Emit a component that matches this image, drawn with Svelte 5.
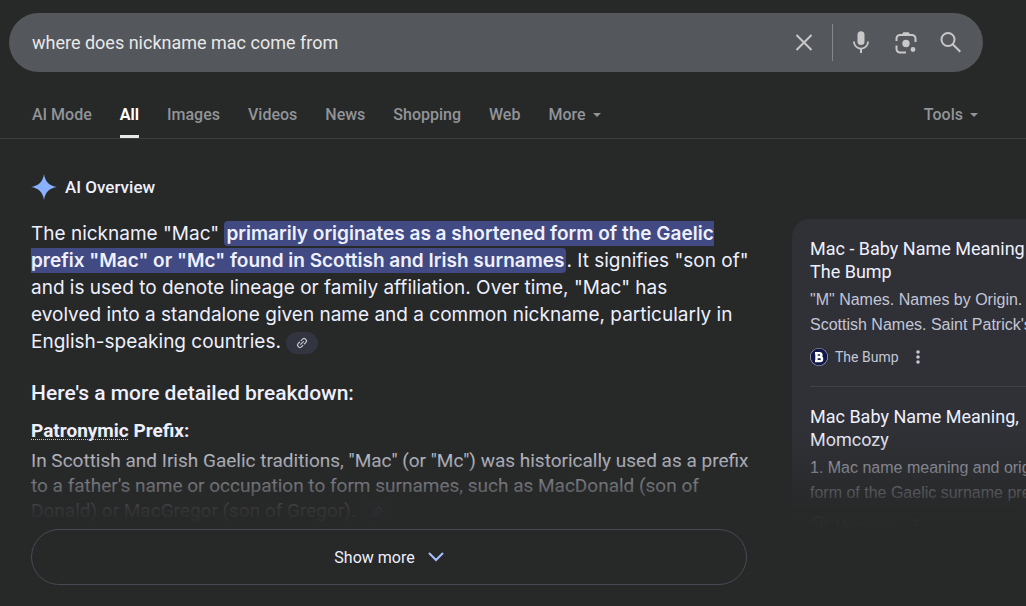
<script>
    let query = "where does nickname mac come from";

    const tabs = [
        "AI Mode",
        "All",
        "Images",
        "Videos",
        "News",
        "Shopping",
        "Web",
    ];
    let active = "All";
</script>

{#snippet linkIcon()}
    <svg class="link" viewBox="0 0 24 24" aria-hidden="true">
        <g transform="rotate(-45 12 12)">
            <path
                d="M11 17H7A5 5 0 0 1 7 7h4v2H7a3 3 0 0 0 0 6h4zm-3-4v-2h8v2zm5 4v-2h4a3 3 0 0 0 0-6h-4V7h4a5 5 0 0 1 0 10z"
            />
        </g>
    </svg>
{/snippet}

{#snippet dots()}
    <svg class="dots" viewBox="0 0 4 14" aria-hidden="true">
        <circle cx="2" cy="2" r="1.8" />
        <circle cx="2" cy="7" r="1.8" />
        <circle cx="2" cy="12" r="1.8" />
    </svg>
{/snippet}

<div class="page">
    <form class="search" role="search" on:submit|preventDefault>
        <input type="text" aria-label="Search" bind:value={query} />
        <button type="button" aria-label="Clear" on:click={() => (query = "")}>
            <svg viewBox="0 0 24 24">
                <path class="line" d="M4.5 4l15 15M19.5 4l-15 15" />
            </svg>
        </button>
        <span class="divider"></span>
        <button type="button" aria-label="Search by voice">
            <svg viewBox="0 0 24 24">
                <path
                    d="M12 14a3.5 3.5 0 0 0 3.5-3.5V3.8a3.5 3.5 0 0 0-7 0v6.7A3.5 3.5 0 0 0 12 14z"
                />
                <path
                    d="M18.2 10.500a6.200 6.200 0 0 1-12.400 0H4a8 8 0 0 0 7 7.900V22h2v-3.600a8 8 0 0 0 7-7.900z"
                />
            </svg>
        </button>
        <button type="button" aria-label="Search by image">
            <svg viewBox="0 0 24 24">
                <path
                    class="line"
                    d="M2.5 10V7.500A3.500 3.500 0 0 1 6 4h12a3.500 3.500 0 0 1 3.500 3.500V11M2.500 14.500V18A3.500 3.500 0 0 0 6 21.500h6"
                />
                <path d="M7.5 4 9.3 1.2h5.400L16.500 4z" />
                <circle cx="12" cy="12.5" r="3.7" />
                <circle cx="19" cy="18.5" r="2.4" />
            </svg>
        </button>
        <button type="submit" aria-label="Search">
            <svg viewBox="0 0 24 24">
                <circle class="line" cx="9" cy="8.5" r="6.5" />
                <path class="line" d="M13.7 13.2l7.600 7.600" />
            </svg>
        </button>
    </form>

    <nav>
        {#each tabs as tab}
            <a
                href="#{tab}"
                class:active={tab === active}
                on:click|preventDefault={() => (active = tab)}>{tab}</a
            >
        {/each}
        <button>More <span class="caret"></span></button>
        <button class="tools">Tools <span class="caret"></span></button>
    </nav>

    <div class="results">
        <main>
            <div class="label">
                <svg class="spark" viewBox="0 0 24 24" aria-hidden="true">
                    <path
                        d="M12 0C13 7 17 11 24 12 17 13 13 17 12 24 11 17 7 13 0 12 7 11 11 7 12 0z"
                    />
                </svg>
                <h1>AI Overview</h1>
            </div>
            <p class="answer">
                The nickname "Mac" <mark
                    >primarily originates as a shortened form of the Gaelic<br
                    />prefix "Mac" or "Mc" found in Scottish and Irish surnames</mark
                >. It signifies "son of"<br />
                and is used to denote lineage or family affiliation. Over time, "Mac"
                has<br />
                evolved into a standalone given name and a common nickname, particularly
                in<br />
                English-speaking countries.
                <button class="chip" aria-label="View related links"
                    >{@render linkIcon()}</button
                >
            </p>
            <h2>Here's a more detailed breakdown:</h2>
            <h3><span>Patronymic</span> Prefix:</h3>
            <p class="detail">
                In Scottish and Irish Gaelic traditions, "Mac" (or "Mc") was historically
                used as a prefix<br />
                to a father's name or occupation to form surnames, such as MacDonald
                (son of<br />
                Donald) or MacGregor (son of Gregor).
                <button class="chip" aria-label="View related links"
                    >{@render linkIcon()}</button
                >
            </p>
        </main>

        <aside>
            <article>
                <a href="#bump">Mac - Baby Name Meaning<br />The Bump</a>
                <p>"M" Names. Names by Origin.<br />Scottish Names. Saint Patrick's</p>
                <div class="source">
                    <svg class="logo" viewBox="0 0 18 18" aria-hidden="true">
                        <circle cx="9" cy="9" r="9" fill="#b5b7c8" />
                        <circle cx="9" cy="9" r="8.4" fill="#11174a" />
                        <path
                            fill="none"
                            stroke="#fff"
                            stroke-width="2.4"
                            d="M5 5.100h4.500a1.900 1.900 0 0 1 0 3.900H6.500h3.500a2 2 0 0 1 0 4.100H5M6.500 5v8"
                        />
                    </svg>
                    <span>The Bump</span>
                    <button aria-label="About this result">{@render dots()}</button>
                </div>
            </article>
            <article>
                <a href="#momcozy">Mac Baby Name Meaning,<br />Momcozy</a>
                <p>1. Mac name meaning and orig<br />form of the Gaelic surname pre</p>
                <div class="source">
                    <svg class="logo" viewBox="0 0 18 18" aria-hidden="true">
                        <circle cx="9" cy="9" r="8" fill="none" stroke="#b5b7c4" stroke-width="2" />
                        <ellipse cx="6.5" cy="9" rx="2" ry="4" fill="#b5b7c4" />
                        <ellipse cx="11.5" cy="9" rx="2" ry="4" fill="#b5b7c4" />
                    </svg>
                    <span>Momcozy</span>
                    <button aria-label="About this result">{@render dots()}</button>
                </div>
            </article>
        </aside>
    </div>

    <div class="expand">
        <button>
            Show more
            <svg viewBox="0 0 16 10" aria-hidden="true">
                <path d="M1 1l7 7 7-7" />
            </svg>
        </button>
    </div>
</div>

<style>
    :global(body) {
        background: #272828;
    }

    .page {
        font-family: Roboto, "Liberation Sans", sans-serif;
        color: #eef0ff;
        overflow: hidden;
    }

    button {
        border: 0;
        padding: 0;
        background: none;
        color: inherit;
        font: inherit;
        cursor: pointer;
    }

    a {
        color: inherit;
        text-decoration: none;
    }

    .search {
        display: flex;
        align-items: center;
        height: 59px;
        box-sizing: border-box;
        margin: 13px 43px 0 9px;
        padding: 0 20px 0 23px;
        border-radius: 30px;
        background: #54575b;
    }

    .search input {
        flex: 1;
        min-width: 0;
        border: 0;
        padding: 0;
        outline: 0;
        background: none;
        color: #e8e8e8;
        font: 18px Roboto, sans-serif;
    }

    .search button {
        display: flex;
        margin-left: 21px;
    }

    .search svg {
        width: 24px;
        height: 24px;
        fill: #c8c8c8;
    }

    .search .line {
        fill: none;
        stroke: #c8c8c8;
        stroke-width: 2;
    }

    .divider {
        width: 1px;
        height: 37px;
        margin: 0 -5px 0 16px;
        background: #85888b;
    }

    nav {
        display: flex;
        gap: 28px;
        height: 66px;
        padding: 0 48px 0 32px;
        border-bottom: 1px solid #3c3d3e;
        color: #919499;
        font-size: 16px;
        font-weight: 500;
        line-height: 20px;
    }

    nav a,
    nav button {
        display: flex;
        align-items: center;
        padding-top: 22px;
        border-bottom: 3px solid transparent;
    }

    nav a.active {
        border-color: #e8e8e8;
        color: #fff;
        font-weight: 700;
    }

    .caret {
        margin-left: 7px;
        border: 4px solid transparent;
        border-top-color: currentColor;
        border-bottom: 0;
    }

    .tools {
        margin-left: auto;
    }

    .results {
        position: relative;
        display: grid;
        grid-template-columns: minmax(0, 716fr) minmax(0, 234fr);
        gap: 45px;
        max-height: 390px;
        padding-left: 31px;
        overflow: hidden;
        white-space: nowrap;
    }

    /* fades the collapsed text out above "Show more" */
    .results::after {
        content: "";
        position: absolute;
        inset: auto 0 0 0;
        height: 96px;
        background: linear-gradient(#27282800, #272828f0 80%, #272828);
        pointer-events: none;
    }

    .label {
        display: flex;
        align-items: center;
        gap: 8px;
        margin-top: 35px;
    }

    .spark {
        width: 26px;
        height: 26px;
        fill: #8ab1ff;
    }

    h1,
    h2,
    h3,
    p {
        margin: 0;
        font-weight: 500;
    }

    h1 {
        font-size: 17px;
        line-height: 20px;
    }

    p {
        font-weight: 400;
    }

    .answer {
        margin-top: 20px;
        font-family: Inter, Roboto, sans-serif;
        font-size: 19px;
        line-height: 27px;
    }

    mark {
        padding: 1px 2px;
        border-radius: 4px;
        background: #414a83;
        color: inherit;
        font-weight: 600;
    }

    .chip {
        display: inline-flex;
        justify-content: center;
        align-items: center;
        width: 32px;
        height: 22px;
        border-radius: 11px;
        background: #32343f;
        vertical-align: middle;
    }

    .link {
        width: 14px;
        height: 14px;
        fill: #c5c7d0;
    }

    h2 {
        margin-top: 25px;
        font-size: 21px;
        line-height: 27px;
    }

    h3 {
        margin-top: 12px;
        font-size: 19px;
        line-height: 24px;
        font-weight: 700;
    }

    h3 span {
        text-decoration: underline dotted 1px #d0d2dc;
        text-decoration-skip-ink: none;
        text-underline-offset: 2px;
    }

    .detail {
        margin-top: 5px;
        font-size: 19px;
        line-height: 25px;
    }

    aside {
        width: 372px;
        box-sizing: border-box;
        margin-top: 80px;
        padding: 0 18px;
        border-radius: 18px;
        background: #303136;
    }

    article {
        padding: 18px 0 20px;
    }

    article + article {
        border-top: 1px solid #404148;
    }

    article a {
        font-size: 18px;
        line-height: 23px;
    }

    article p {
        margin-top: 4px;
        color: #c3c6d6;
        font: 16px / 25px "Liberation Sans", sans-serif;
    }

    .source {
        display: flex;
        align-items: center;
        gap: 7px;
        margin-top: 11px;
        color: #c3c6d6;
        font-size: 14px;
    }

    .source button {
        display: flex;
        margin-left: 10px;
    }

    .logo {
        width: 18px;
        height: 18px;
    }

    .dots {
        width: 4px;
        height: 14px;
        fill: #c3c6d6;
    }

    .expand {
        display: grid;
        grid-template-columns: minmax(0, 716fr) minmax(0, 234fr);
        gap: 45px;
        padding: 0 0 21px 31px;
    }

    .expand button {
        display: flex;
        justify-content: center;
        align-items: center;
        gap: 13px;
        height: 56px;
        border: 1px solid #484955;
        border-radius: 28px;
        font-size: 16px;
    }

    .expand svg {
        width: 16px;
        height: 10px;
        fill: none;
        stroke: #a8c0ff;
        stroke-width: 2;
    }
</style>
